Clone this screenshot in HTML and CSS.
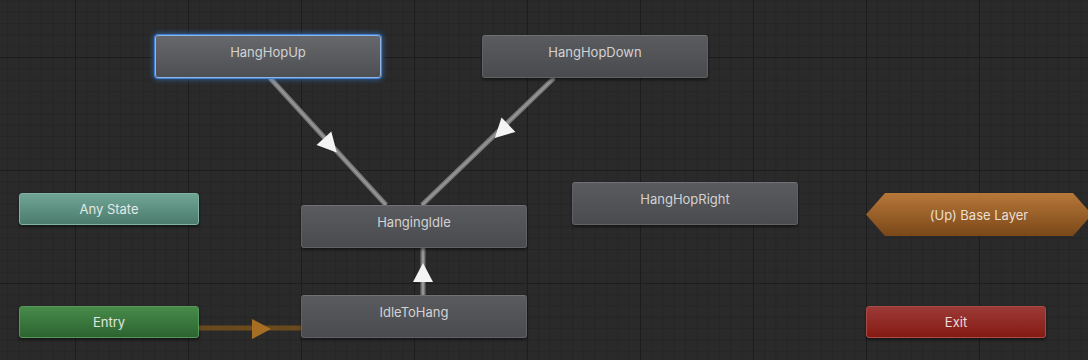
FILE: index.html
```html
<!DOCTYPE HTML>
<html>
<head>
<meta http-equiv="Content-Type" content="text/html; charset=utf-8">
<title>Animator</title>
<link rel="stylesheet" href="styles.css">
</head>

<body>
<div id="graph">
	<svg class="links" width="1088" height="360" viewBox="0 0 1088 360">
		<!-- transitions -->
		<g class="link">
			<line x1="270" y1="78" x2="386" y2="205"/>
			<line x1="554" y1="78" x2="422" y2="205"/>
			<line x1="423" y1="248" x2="423" y2="295"/>
		</g>
		<g class="link-core">
			<line x1="270" y1="78" x2="386" y2="205"/>
			<line x1="554" y1="78" x2="422" y2="205"/>
			<line x1="423" y1="248" x2="423" y2="295"/>
		</g>
		<line class="entry-link" x1="199" y1="328" x2="301" y2="328"/>
		<g class="arrow">
			<polygon points="10,0 -9,-10 -9,10" transform="translate(330 145) rotate(47.6)"/>
			<polygon points="10,0 -9,-10 -9,10" transform="translate(502 131) rotate(136)"/>
			<polygon points="10,0 -9,-10 -9,10" transform="translate(423 273) rotate(-90)"/>
		</g>
		<polygon class="entry-arrow" points="10,0 -9,-10 -9,10" transform="translate(261 329)"/>
	</svg>

	<div class="node state selected" style="left:155px;top:35px">HangHopUp</div>
	<div class="node state" style="left:482px;top:35px">HangHopDown</div>
	<div class="node state" style="left:301px;top:205px">HangingIdle</div>
	<div class="node state" style="left:572px;top:182px">HangHopRight</div>
	<div class="node state" style="left:301px;top:295px">IdleToHang</div>

	<div class="node small any" style="left:19px;top:193px">Any State</div>
	<div class="node small entry" style="left:19px;top:306px">Entry</div>
	<div class="node small exit" style="left:866px;top:306px">Exit</div>

	<div class="layer" style="left:866px;top:193px">(Up) Base Layer</div>
</div>
</body>
</html>
```

FILE: styles.css
```css
*{
	margin: 0;
	padding: 0;
}

body{
	background-color: #2a2a2a;
	font-family: Inter, "Noto Sans", sans-serif;
	font-size: 13px;
}

#graph{
	position: relative;
	width: 1088px;
	height: 360px;
	overflow: hidden;
	background-color: #2a2a2a;
	background-image:
		linear-gradient(to right, #1d1d1d 1px, transparent 1px),
		linear-gradient(to bottom, #1d1d1d 1px, transparent 1px),
		linear-gradient(to right, #252525 1px, transparent 1px),
		linear-gradient(to bottom, #252525 1px, transparent 1px);
	background-size: 113px 113px, 113px 113px, 11.3px 11.3px, 11.3px 11.3px;
	background-position: 75px 57px;
}

.links{
	position: absolute;
	left: 0;
	top: 0;
}

.link line{
	stroke: #767676;
	stroke-width: 5;
}

.link-core line{
	stroke: #959595;
	stroke-width: 2;
}

.entry-link{
	stroke: #6a4a1c;
	stroke-width: 5;
}

.arrow polygon{
	fill: #f4f4f4;
}

.entry-arrow{
	fill: #a56e22;
}

.node{
	position: absolute;
	box-sizing: border-box;
	text-align: center;
	color: #d2d2d2;
	line-height: 32px;
	border-radius: 3px;
	box-shadow: 0 2px 3px rgba(0, 0, 0, 0.45);
}

.state{
	width: 226px;
	height: 43px;
	border: 1px solid #606165;
	border-top-color: #707175;
	background: linear-gradient(to bottom, #5a5b5f, #4a4b4f);
}

.state.selected{
	border-color: #8fb4e6;
	background: linear-gradient(to bottom, #67686c, #4e4f53);
	box-shadow: 0 0 0 1px #3f82d6, 0 0 5px 2px rgba(60, 130, 220, 0.55);
}

.small{
	width: 180px;
	height: 32px;
	line-height: 30px;
	border: 1px solid transparent;
}

.any{
	background: linear-gradient(to bottom, #70a595, #4b7b6d);
	border-color: #7fb3a3;
	color: #e2e8e6;
}

.entry{
	background: linear-gradient(to bottom, #478b4a, #2c6430);
	border-color: #55985a;
	color: #e0e6e0;
}

.exit{
	background: linear-gradient(to bottom, #9b3a37, #861a13);
	border-color: #a84b47;
	color: #ecdcdc;
}

.layer{
	position: absolute;
	box-sizing: border-box;
	width: 226px;
	height: 43px;
	padding-top: 2px;
	line-height: 41px;
	text-align: center;
	color: #eadfd2;
	background: linear-gradient(to bottom, #b77739, #7a4819);
	clip-path: polygon(19px 0, calc(100% - 19px) 0, 100% 50%, calc(100% - 19px) 100%, 19px 100%, 0 50%);
}
```
